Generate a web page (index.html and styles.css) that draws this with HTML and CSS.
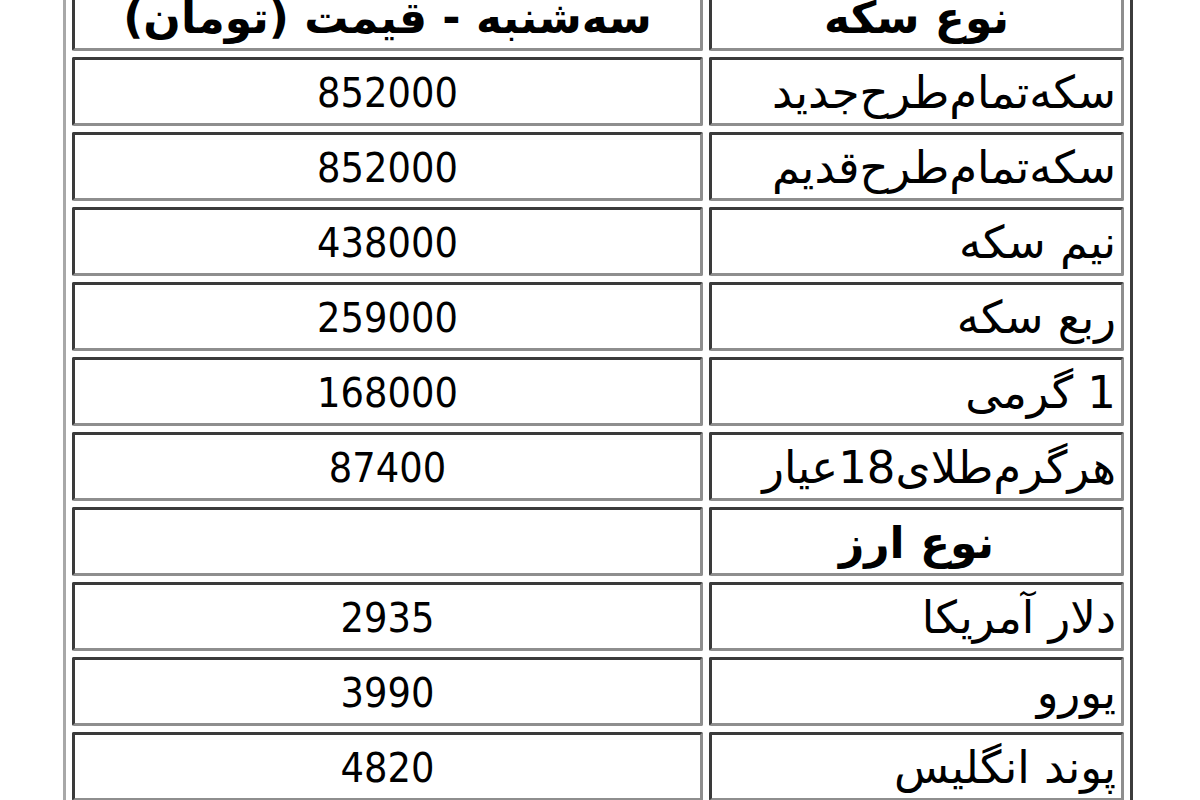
FILE: index.html
```html
<!DOCTYPE html>
<html lang="fa">
<head>
<meta charset="utf-8">
<title>قیمت سکه و ارز</title>
<link rel="stylesheet" href="styles.css">
</head>
<body>
<table class="prices" dir="rtl">
  <colgroup>
    <col class="col-name">
    <col class="col-price">
  </colgroup>
  <tr class="head">
    <th>نوع سکه</th>
    <th>سه‌شنبه - قیمت (تومان)</th>
  </tr>
  <tr><td class="name">سکه‌تمام‌طرح‌جدید</td><td class="price">852000</td></tr>
  <tr><td class="name">سکه‌تمام‌طرح‌قدیم</td><td class="price">852000</td></tr>
  <tr><td class="name">نیم سکه</td><td class="price">438000</td></tr>
  <tr><td class="name">ربع سکه</td><td class="price">259000</td></tr>
  <tr><td class="name">1 گرمی</td><td class="price">168000</td></tr>
  <tr><td class="name">هرگرم‌طلای18عیار</td><td class="price">87400</td></tr>
  <tr class="head"><th>نوع ارز</th><td class="price"></td></tr>
  <tr><td class="name">دلار آمریکا</td><td class="price">2935</td></tr>
  <tr><td class="name">یورو</td><td class="price">3990</td></tr>
  <tr><td class="name">پوند انگلیس</td><td class="price">4820</td></tr>
</table>
</body>
</html>
```
FILE: styles.css
```css
html, body {
  margin: 0;
  padding: 0;
  background: #ffffff;
}

body {
  font-family: "DejaVu Sans Condensed", "DejaVu Sans", sans-serif;
  font-stretch: condensed;
  font-size: 41px;
  color: #000000;
}

.prices {
  margin: -27px 0 0 63px;
  width: 1070px;
  table-layout: fixed;
  border-collapse: separate;
  border-spacing: 6px;
  border-style: solid;
  border-width: 3px;
  border-color: #a8a8a8 #3c3c3c #3c3c3c #a8a8a8;
}

.col-name {
  width: 415px;
}

.col-price {
  width: 631px;
}

.prices th,
.prices td {
  box-sizing: border-box;
  height: 69px;
  padding: 2px 5px 0 5px;
  line-height: 60px;
  vertical-align: middle;
  border-style: solid;
  border-width: 3px;
  border-color: #3a3a3a #8e8e8e #8e8e8e #3a3a3a;
  border-radius: 2px;
  white-space: nowrap;
  overflow: hidden;
}

.prices th {
  font-family: "DejaVu Sans", sans-serif;
  font-stretch: normal;
  font-size: 44px;
  font-weight: bold;
  text-align: center;
}

.name {
  font-family: "DejaVu Sans", sans-serif;
  font-stretch: normal;
  font-size: 45px;
  text-align: right;
}

.price {
  text-align: center;
}
```
